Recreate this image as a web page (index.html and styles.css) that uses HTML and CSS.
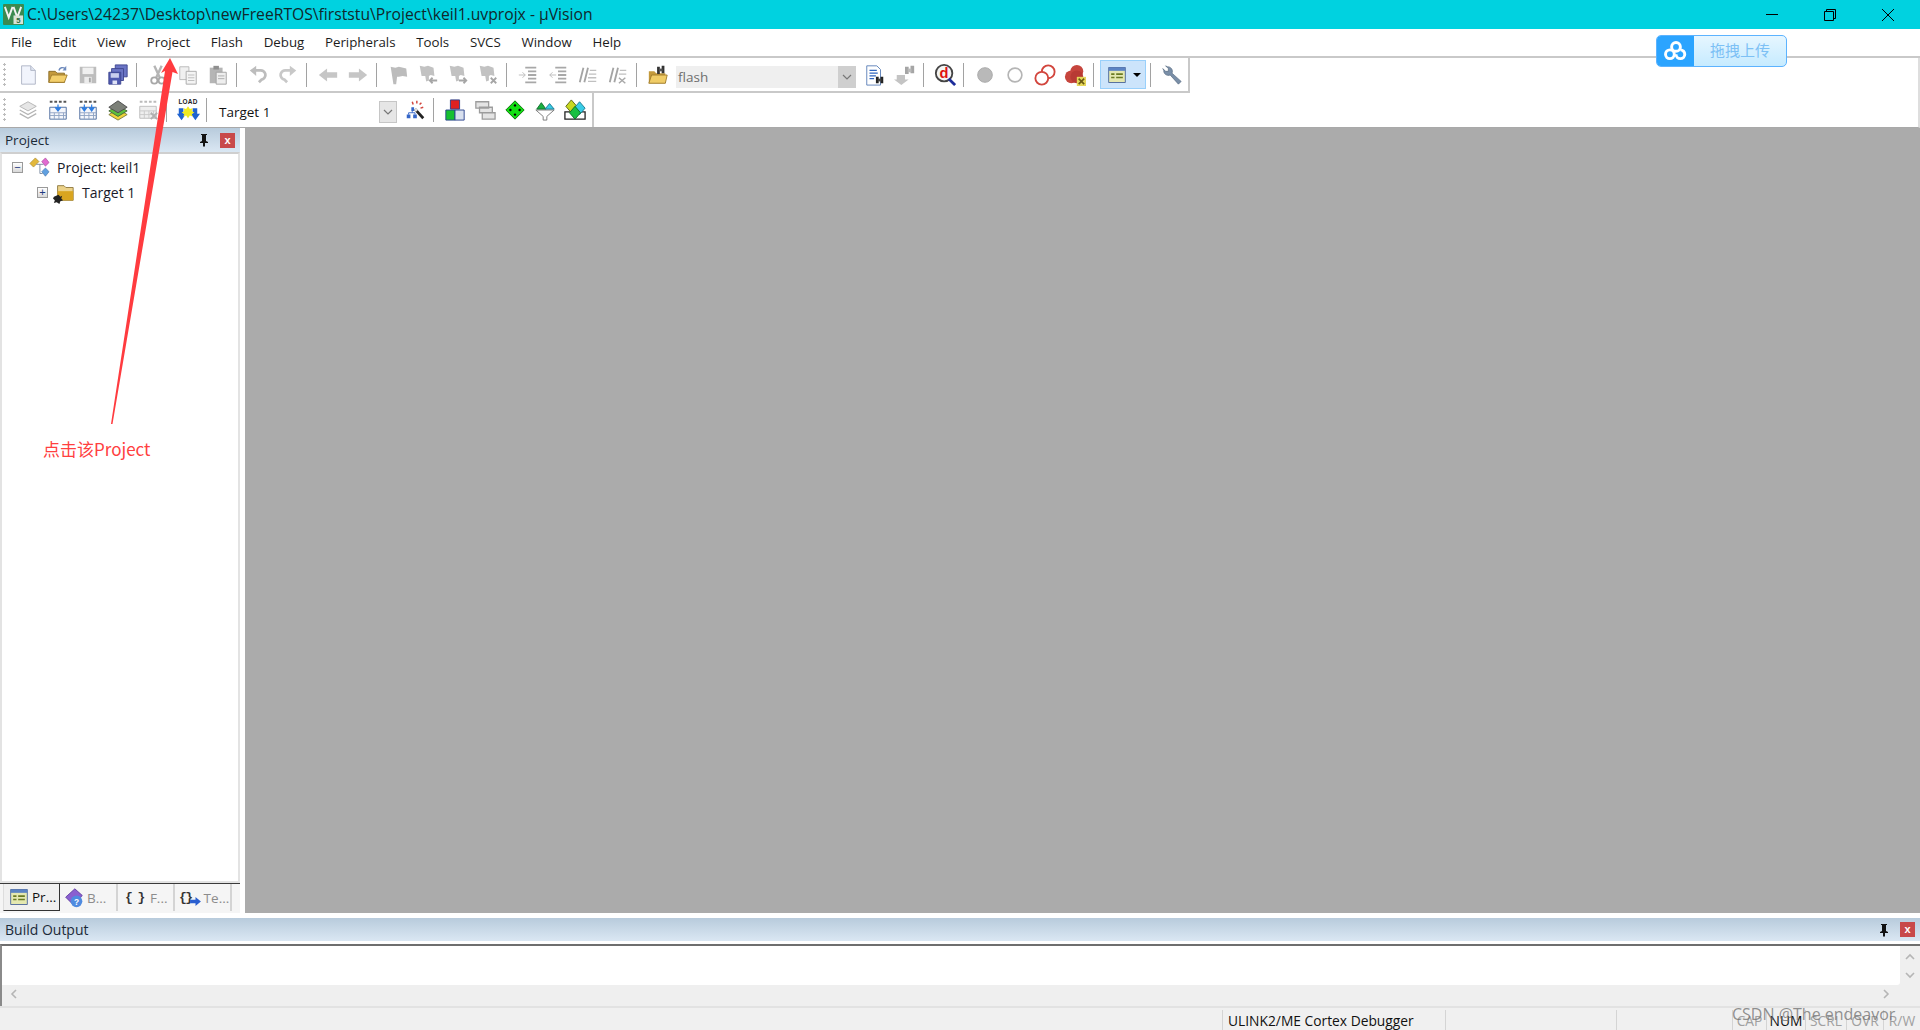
FILE: index.html
```html
<!DOCTYPE html>
<html lang="en">
<head>
<meta charset="utf-8">
<title>keil1 - µVision</title>
<link rel="stylesheet" href="styles.css">
</head>
<body>
<svg class="defs" width="0" height="0">
  <symbol id="new" viewBox="0 0 24 24"><path d="M5 2h10l5 5v15H5z" fill="#f1f4fc" stroke="#aeb4c4"/><path d="M15 2v5h5" fill="#dfe4f0" stroke="#aeb4c4"/></symbol>
  <symbol id="open" viewBox="0 0 24 24"><path d="M2 8h7l2 2h8v10H2z" fill="#c49a3c" stroke="#8a6a24"/><path d="M2 20l3-8h17l-3 8z" fill="#f3cf6b" stroke="#a07c2c"/><path d="M13 7c1-3 4-4 7-2" fill="none" stroke="#6f8bbd" stroke-width="1.6"/><path d="M21 2v5h-4z" fill="#6f8bbd"/></symbol>
  <symbol id="save" viewBox="0 0 24 24"><path d="M3 3h18v18H3z" fill="#bdbdbd"/><path d="M6 4h12v7H6z" fill="#f0f0f0"/><path d="M8 14h8v7H8z" fill="#ececec"/><path d="M13 15h2v5h-2z" fill="#a5a5a5"/></symbol>
  <symbol id="saveall" viewBox="0 0 24 24"><path d="M9 1h13v13H9z" fill="#6a74c4" stroke="#3e4690"/><path d="M5 5h13v13H5z" fill="#6a74c4" stroke="#3e4690"/><path d="M2 9h13v13H2z" fill="#4f5ab0" stroke="#3e4690"/><path d="M4 10h9v5H4z" fill="#c9cfee"/><path d="M6 18h5v4H6z" fill="#dfe3f6"/></symbol>
  <symbol id="cut" viewBox="0 0 24 24"><path d="M8 2l6 13M16 2l-6 13" stroke="#b5b5b5" stroke-width="2.6" fill="none"/><circle cx="8" cy="18" r="3.4" fill="none" stroke="#a8a8a8" stroke-width="2"/><circle cx="16" cy="18" r="3.4" fill="none" stroke="#a8a8a8" stroke-width="2"/></symbol>
  <symbol id="copy" viewBox="0 0 24 24"><path d="M3 3h10v14H3z" fill="#f0f0f0" stroke="#b8b8b8"/><path d="M10 8h11v14H10z" fill="#f4f4f4" stroke="#a8a8a8"/><path d="M12 12h7M12 15h7M12 18h7" stroke="#bbb"/></symbol>
  <symbol id="paste" viewBox="0 0 24 24"><path d="M3 4h14v17H3z" fill="#b5b5b5"/><path d="M7 2h6v4H7z" fill="#8f8f8f"/><path d="M10 9h11v13H10z" fill="#eee" stroke="#a0a0a0"/><path d="M12 13h7M12 16h7" stroke="#aaa"/></symbol>
  <symbol id="undo" viewBox="0 0 24 24"><path d="M8 7h6a5 5 0 0 1 2 10l-3 3" fill="none" stroke="#bdbdbd" stroke-width="3"/><path d="M10 2v11L3 7z" fill="#bdbdbd"/></symbol>
  <symbol id="redo" viewBox="0 0 24 24"><path d="M16 7h-6a5 5 0 0 0-2 10l3 3" fill="none" stroke="#c8c8c8" stroke-width="3"/><path d="M14 2v11l7-6z" fill="#c8c8c8"/></symbol>
  <symbol id="back" viewBox="0 0 24 24"><path d="M2 12l9-7v4h11v6H11v4z" fill="#c6c6c6"/></symbol>
  <symbol id="fwd" viewBox="0 0 24 24"><path d="M22 12l-9-7v4H2v6h11v4z" fill="#c6c6c6"/></symbol>
  <symbol id="flag" viewBox="0 0 24 24"><path d="M4 3l5 1 4-1 8 2 1 9-5-1-4 1-2 0-1 8H7z" fill="#bcbcbc"/></symbol>
  <symbol id="flagl" viewBox="0 0 24 24"><path d="M3 2l5 1 4-1 6 2 1 9-4-1-2 1v5l-3 1-1-6H5z" fill="#c2c2c2"/><path d="M22 18h-8M17 15l-3 3 3 3" stroke="#a6a6a6" stroke-width="2" fill="none"/></symbol>
  <symbol id="flagr" viewBox="0 0 24 24"><path d="M3 2l5 1 4-1 6 2 1 9-4-1-2 1v5l-3 1-1-6H5z" fill="#c2c2c2"/><path d="M13 18h8M18 15l3 3-3 3" stroke="#a6a6a6" stroke-width="2" fill="none"/></symbol>
  <symbol id="flagx" viewBox="0 0 24 24"><path d="M3 2l5 1 4-1 6 2 1 9-4-1-2 1v5l-3 1-1-6H5z" fill="#c2c2c2"/><path d="M15 15l6 6M21 15l-6 6" stroke="#a6a6a6" stroke-width="2"/></symbol>
  <symbol id="indent" viewBox="0 0 24 24"><path d="M9 4h12M12 8h9M12 12h9M12 16h9M9 20h12" stroke="#a8a8a8" stroke-width="2"/><path d="M2 12h7M6 9l3 3-3 3" stroke="#bbb" fill="none"/></symbol>
  <symbol id="outdent" viewBox="0 0 24 24"><path d="M9 4h12M12 8h9M12 12h9M12 16h9M9 20h12" stroke="#a8a8a8" stroke-width="2"/><path d="M3 12h7M6 9l-3 3 3 3" stroke="#bbb" fill="none"/></symbol>
  <symbol id="cmt" viewBox="0 0 24 24"><path d="M7 4L3 20M12 4L8 20" stroke="#a4a4a4" stroke-width="2"/><path d="M14 7h7M13 11h8M12 15h9M12 19h9" stroke="#c0c0c0" stroke-width="1.4"/></symbol>
  <symbol id="uncmt" viewBox="0 0 24 24"><path d="M7 4L3 20M12 4L8 20" stroke="#a4a4a4" stroke-width="2"/><path d="M14 7h7M13 11h8" stroke="#c0c0c0" stroke-width="1.4"/><path d="M13 15l7 6M20 15l-7 6" stroke="#a8a8a8" stroke-width="1.6"/></symbol>
  <symbol id="findfold" viewBox="0 0 24 24"><path d="M2 8h6l2 2h10v11H2z" fill="#c49a3c"/><path d="M2 21l3-9h17l-2 9z" fill="#f0cc66" stroke="#a07c2c"/><path d="M11 3h3v8h-3zM16 2h3v8h-3z" fill="#333"/><path d="M13 5h4v3h-4z" fill="#555"/></symbol>
  <symbol id="finddoc" viewBox="0 0 24 24"><path d="M3 2h11l4 4v17H3z" fill="#fff" stroke="#5b7fb8"/><path d="M6 7h8M6 10h9M6 13h7M6 16h5" stroke="#2f66c0" stroke-width="1.5"/><path d="M13 14h3v7h-3zM18 14h3v7h-3z" fill="#222"/><path d="M15 16h4v3h-4z" fill="#444"/></symbol>
  <symbol id="findgray" viewBox="0 0 24 24"><path d="M12 3h4v8h-4zM18 2h4v8h-4z" fill="#a5a5a5"/><path d="M15 5h4v4h-4z" fill="#bbb"/><path d="M3 12h9v5h4l-8 6-8-6h3z" fill="#c4c4c4"/></symbol>
  <symbol id="debug" viewBox="0 0 24 24"><circle cx="11" cy="10" r="9" fill="#f4f4f4" stroke="#444" stroke-width="2"/><path d="M16 16l7 7" stroke="#1c2c9a" stroke-width="3"/></symbol>
  <symbol id="bp" viewBox="0 0 24 24"><circle cx="12" cy="12" r="8" fill="#b9b9b9" stroke="#a9a9a9"/></symbol>
  <symbol id="bpo" viewBox="0 0 24 24"><circle cx="12" cy="12" r="7.5" fill="#fff" stroke="#b5b5b5" stroke-width="1.8"/></symbol>
  <symbol id="bpd" viewBox="0 0 24 24"><circle cx="15.500" cy="8.500" r="7" fill="#fff" stroke="#d2453d" stroke-width="2"/><circle cx="8.500" cy="15.500" r="7" fill="#fff" stroke="#d2453d" stroke-width="2"/></symbol>
  <symbol id="bpk" viewBox="0 0 24 24"><circle cx="14" cy="8" r="7" fill="#c6453d"/><circle cx="8" cy="14" r="7" fill="#c6453d"/><circle cx="14" cy="14" r="7" fill="#b83a34"/><path d="M14 14h10v10H14z" fill="#e6d75a"/><path d="M16 16l6 6M22 16l-6 6" stroke="#6b5b12" stroke-width="1.8"/></symbol>
  <symbol id="win" viewBox="0 0 24 24"><path d="M2 3h20v18H2z" fill="#e4e8b0" stroke="#3f5a94"/><path d="M2 3h20v4H2z" fill="#5b83c4"/><path d="M5 10h4v2H5zM5 14h4v2H5zM11 10h8v2h-8zM11 14h8v2h-8z" fill="#6a7a22"/></symbol>
  <symbol id="wrench" viewBox="0 0 24 24"><path d="M3 7a5 5 0 0 0 7 5l9 10 3-3-10-9a5 5 0 0 0-5-7L5 2l3 3v3H5L2 5z" fill="#7a8fa8" stroke="#52657d" stroke-width=".7"/></symbol>
  <symbol id="trans" viewBox="0 0 24 24"><path d="M12 3l9 5-9 5-9-5z" fill="#e6e6e6" stroke="#b4b4b4"/><path d="M3 12l9 5 9-5M3 16l9 5 9-5" fill="none" stroke="#b4b4b4" stroke-width="1.5"/></symbol>
  <symbol id="build" viewBox="0 0 24 24"><path d="M3 9h18v13H3z" fill="#f4f6fb" stroke="#4a6a9c"/><path d="M3 15h18M3 18h18M8 15v7M13 15v7M18 15v7" stroke="#8fa3c3"/><path d="M3 3h18" stroke="#555" stroke-width="2" stroke-dasharray="3 2"/><path d="M12 6v6M9 9l3 4 3-4" fill="#2f7de0" stroke="#2f7de0" stroke-width="1.4"/></symbol>
  <symbol id="rebuild" viewBox="0 0 24 24"><path d="M3 9h18v13H3z" fill="#f4f6fb" stroke="#4a6a9c"/><path d="M3 15h18M3 18h18M8 15v7M13 15v7M18 15v7" stroke="#8fa3c3"/><path d="M3 3h18" stroke="#555" stroke-width="2" stroke-dasharray="3 2"/><path d="M8 6v6M5 9l3 4 3-4M16 6v6M13 9l3 4 3-4" fill="#2f7de0" stroke="#2f7de0" stroke-width="1.3"/></symbol>
  <symbol id="batch" viewBox="0 0 24 24"><path d="M2 17l10 6 10-6-10-6z" fill="#f0d43c" stroke="#7c7c3c"/><path d="M2 13l10 6 10-6-10-6z" fill="#5cbf3c" stroke="#4a6a3c"/><path d="M2 9l10 6 10-6-10-7z" fill="#7c8078" stroke="#4a4a4a"/></symbol>
  <symbol id="stop" viewBox="0 0 24 24"><path d="M3 8h18v13H3z" fill="#eee" stroke="#bbb"/><path d="M3 13h18M3 17h18M8 13v8M13 13v8M18 13v8" stroke="#c8c8c8"/><path d="M3 3h18" stroke="#bbb" stroke-width="2" stroke-dasharray="3 2"/><path d="M15 15l7 7M22 15l-7 7" stroke="#b0b0b0" stroke-width="2"/></symbol>
  <symbol id="load" viewBox="0 0 26 26"><path d="M3 11h5v6h3l-5 7-5-7h2zM18 11h5v6h3l-5 7-5-7h2z" fill="#1f63d0"/><path d="M13 9l2 3 3-1-1 3 3 2-3 1 1 3-3-1-2 3-2-3-3 1 1-3-3-1 3-2-1-3 3 1z" fill="#f0ea20"/></symbol>
  <symbol id="wand" viewBox="0 0 24 24"><path d="M12 11l9 10" stroke="#222" stroke-width="3"/><path d="M12 11l2 2" stroke="#ddd" stroke-width="3"/><path d="M9 3l1 3M14 2v3M19 4l-2 2M21 9l-3 1" stroke="#d2453d" stroke-width="1.6"/><path d="M8 9h3v4H8zM3 17h4v4H3zM10 17h4v4h-4z" fill="#3566c8"/><path d="M9 13v2M5 17v-2h7v2" stroke="#3566c8" fill="none"/></symbol>
  <symbol id="blocks" viewBox="0 0 24 24"><path d="M7 1h10v10H7z" fill="#e02020" stroke="#28428c"/><path d="M2 12h10v11H2z" fill="#16c030" stroke="#28428c"/><path d="M12 12h10v11H12z" fill="#d8e0ee" stroke="#28428c"/></symbol>
  <symbol id="wins" viewBox="0 0 24 24"><path d="M2 3h14v7H2zM6 9h14v6H6zM9 15h14v7H9z" fill="#e4e4e4" stroke="#9c9c9c" stroke-width="1.4"/></symbol>
  <symbol id="gem" viewBox="0 0 24 24"><path d="M12 2l10 10-10 10L2 12z" fill="#12e012" stroke="#0a6a0a"/><circle cx="12" cy="7" r="1.3"/><circle cx="7" cy="12" r="1.3"/><circle cx="17" cy="12" r="1.3"/><circle cx="12" cy="17" r="1.3"/></symbol>
  <symbol id="funnel" viewBox="0 0 24 24"><path d="M2 12h20l-8 7v4h-4v-4z" fill="#fff" stroke="#777"/><path d="M3 11l5-7 5 7z" fill="#18b040" stroke="#0d6a28"/><path d="M12 11l5-6 5 6z" fill="#38cce6" stroke="#1a7a90"/></symbol>
  <symbol id="gems" viewBox="0 0 24 24"><path d="M1 14h22v8H1z" fill="#fff" stroke="#222" stroke-width="1.4"/><path d="M8 1l6 7-6 7-6-7z" fill="#c8d820" stroke="#556010"/><path d="M17 3l6 7-6 7-6-7z" fill="#38cce6" stroke="#1a7a90"/><path d="M12 8l6 7-6 7-6-7z" fill="#18c040" stroke="#0d6a28"/></symbol>
  <symbol id="proj" viewBox="0 0 24 24"><path d="M2 7l6-6 4 4-6 6z" fill="#e2b83c" stroke="#9a7a20" stroke-width=".6"/><path d="M15 5l4-4 4 5-4 4z" fill="#e06cd0" stroke="#9c3a90" stroke-width=".6"/><path d="M15 16l4-4 4 4-4 5z" fill="#60a0e0" stroke="#3a6aa0" stroke-width=".6"/><path d="M9 8h8M13 8v10h3" fill="none" stroke="#7a8aa0"/></symbol>
  <symbol id="folder" viewBox="0 0 24 24"><path d="M5 4h7l2 2h8v14H5z" fill="#ecd28a" stroke="#8f7a40"/><path d="M5 10h17v10H5z" fill="#d9a520"/><path d="M1 16l5-2 2 2 2-1-1 3 2 2-3 1-1 3-3-2-3 1 1-3-2-2z" fill="#222"/></symbol>
  <symbol id="book" viewBox="0 0 24 24"><path d="M2 11L13 1l9 8-11 11z" fill="#8a5fd0" stroke="#5c3a9c"/><circle cx="15" cy="16" r="7" fill="#4f8be0"/></symbol>
  <symbol id="bluearrow" viewBox="0 0 12 10"><path d="M0 3h6V0l6 5-6 5V7H0z" fill="#2a5fd0"/></symbol>
  <symbol id="pin" viewBox="0 0 12 14"><path d="M3 1h6v1H8v6l2 1v1H2V9l2-1V2H3zM5 10h2v3l-1 1-1-1z" fill="#111"/></symbol>
  <symbol id="chev" viewBox="0 0 12 12"><path d="M2 4l4 4 4-4" fill="none" stroke="#777" stroke-width="1.2"/></symbol>
  <symbol id="chev-light" viewBox="0 0 12 12"><path d="M2 8l4-4 4 4" fill="none" stroke="#b5b5b5" stroke-width="1.6"/></symbol>
  <symbol id="chev-down" viewBox="0 0 12 12"><path d="M2 4l4 4 4-4" fill="none" stroke="#b5b5b5" stroke-width="1.6"/></symbol>
  <symbol id="chev-left" viewBox="0 0 12 12"><path d="M8 2L4 6l4 4" fill="none" stroke="#b5b5b5" stroke-width="1.6"/></symbol>
  <symbol id="chev-right" viewBox="0 0 12 12"><path d="M4 2l4 4-4 4" fill="none" stroke="#b5b5b5" stroke-width="1.6"/></symbol>
  <symbol id="cloud" viewBox="0 0 32 26"><g fill="none" stroke="#fff" stroke-width="3.6"><circle cx="16" cy="8" r="5.4"/><circle cx="8.5" cy="17" r="5.4"/><path d="M16 17a5.4 5.4 0 1 0 5.4-5.4"/></g></symbol>
</svg>

<header class="titlebar">
  <svg class="appicon" viewBox="0 0 22 22"><rect width="22" height="22" rx="1" fill="#3a8a50"/><path d="M2 3l4 11 4-11M11 3l4 11 4-11" fill="none" stroke="#f2f2f2" stroke-width="2"/><rect x="11" y="12" width="10" height="9" fill="#d8e4d8"/><text x="16" y="20" text-anchor="middle" class="svg-5">5</text></svg>
  <span class="title-text">C:\Users\24237\Desktop\newFreeRTOS\firststu\Project\keil1.uvprojx - µVision</span>
  <div class="winctl">
    <svg class="wbtn" viewBox="0 0 12 12"><path d="M0 5.500h12" stroke="#000" fill="none"/></svg>
    <svg class="wbtn" viewBox="0 0 12 12"><path d="M.5 2.500h9v9h-9zM2.500 2.500v-2h9v9h-2" stroke="#000" fill="none"/></svg>
    <svg class="wbtn" viewBox="0 0 12 12"><path d="M0 0l12 12M12 0L0 12" stroke="#000" fill="none"/></svg>
  </div>
</header>

<nav class="menubar">
  <span class="mi">File</span><span class="mi">Edit</span><span class="mi">View</span><span class="mi">Project</span><span class="mi">Flash</span><span class="mi">Debug</span><span class="mi">Peripherals</span><span class="mi">Tools</span><span class="mi">SVCS</span><span class="mi">Window</span><span class="mi">Help</span>
</nav>

<section class="toolbars">
  <div class="toolbar tb-file">
    <span class="grip"></span>
    <span class="cell"><svg class="ic"><use href="#new"/></svg></span>
    <span class="cell"><svg class="ic"><use href="#open"/></svg></span>
    <span class="cell"><svg class="ic"><use href="#save"/></svg></span>
    <span class="cell"><svg class="ic"><use href="#saveall"/></svg></span>
    <span class="sep"></span>
    <span class="cell"><svg class="ic"><use href="#cut"/></svg></span>
    <span class="cell"><svg class="ic"><use href="#copy"/></svg></span>
    <span class="cell"><svg class="ic"><use href="#paste"/></svg></span>
    <span class="sep"></span>
    <span class="cell"><svg class="ic"><use href="#undo"/></svg></span>
    <span class="cell"><svg class="ic"><use href="#redo"/></svg></span>
    <span class="sep"></span>
    <span class="cell"><svg class="ic"><use href="#back"/></svg></span>
    <span class="cell"><svg class="ic"><use href="#fwd"/></svg></span>
    <span class="sep"></span>
    <span class="cell"><svg class="ic"><use href="#flag"/></svg></span>
    <span class="cell"><svg class="ic"><use href="#flagl"/></svg></span>
    <span class="cell"><svg class="ic"><use href="#flagr"/></svg></span>
    <span class="cell"><svg class="ic"><use href="#flagx"/></svg></span>
    <span class="sep"></span>
    <span class="cell"><svg class="ic"><use href="#indent"/></svg></span>
    <span class="cell"><svg class="ic"><use href="#outdent"/></svg></span>
    <span class="cell"><svg class="ic"><use href="#cmt"/></svg></span>
    <span class="cell"><svg class="ic"><use href="#uncmt"/></svg></span>
    <span class="sep"></span>
    <span class="cell"><svg class="ic"><use href="#findfold"/></svg></span>
    <div class="combo combo-flash"><span class="combo-text">flash</span><span class="combo-btn"><svg class="chev"><use href="#chev"/></svg></span></div>
    <span class="cell"><svg class="ic"><use href="#finddoc"/></svg></span>
    <span class="cell"><svg class="ic"><use href="#findgray"/></svg></span>
    <span class="sep"></span>
    <span class="cell"><svg class="ic" viewBox="0 0 24 24"><use href="#debug"/><text x="11" y="15.500" text-anchor="middle" class="svg-d">d</text></svg></span>
    <span class="sep"></span>
    <span class="cell"><svg class="ic"><use href="#bp"/></svg></span>
    <span class="cell"><svg class="ic"><use href="#bpo"/></svg></span>
    <span class="cell"><svg class="ic"><use href="#bpd"/></svg></span>
    <span class="cell"><svg class="ic"><use href="#bpk"/></svg></span>
    <span class="sep"></span>
    <span class="active-btn"><svg class="ic"><use href="#win"/></svg><span class="caret"></span></span>
    <span class="sep sep-tight"></span>
    <span class="cell"><svg class="ic"><use href="#wrench"/></svg></span>
  </div>
  <div class="toolbar tb-build">
    <span class="grip"></span>
    <span class="cell"><svg class="ic"><use href="#trans"/></svg></span>
    <span class="cell"><svg class="ic"><use href="#build"/></svg></span>
    <span class="cell"><svg class="ic"><use href="#rebuild"/></svg></span>
    <span class="cell"><svg class="ic"><use href="#batch"/></svg></span>
    <span class="cell"><svg class="ic"><use href="#stop"/></svg></span>
    <span class="sep"></span>
    <span class="cell"><svg class="ic ic-load" viewBox="0 0 26 26"><use href="#load"/><text x="13" y="7" text-anchor="middle" class="svg-load">LOAD</text></svg></span>
    <span class="sep"></span>
    <div class="combo combo-target"><span class="combo-text">Target 1</span><span class="combo-btn"><svg class="chev"><use href="#chev"/></svg></span></div>
    <span class="cell"><svg class="ic"><use href="#wand"/></svg></span>
    <span class="sep"></span>
    <span class="cell"><svg class="ic"><use href="#blocks"/></svg></span>
    <span class="cell"><svg class="ic"><use href="#wins"/></svg></span>
    <span class="cell"><svg class="ic"><use href="#gem"/></svg></span>
    <span class="cell"><svg class="ic"><use href="#funnel"/></svg></span>
    <span class="cell"><svg class="ic"><use href="#gems"/></svg></span>
  </div>
</section>

<main class="workspace">
  <aside class="project">
    <div class="panel-head"><span class="panel-title">Project</span><svg class="pin"><use href="#pin"/></svg><span class="close">x</span></div>
    <div class="tree">
      <div class="row row-root"><span class="box">−</span><svg class="tree-ic"><use href="#proj"/></svg><span>Project: keil1</span></div>
      <div class="row row-child"><span class="box">+</span><svg class="tree-ic"><use href="#folder"/></svg><span>Target 1</span></div>
    </div>
    <div class="tabs">
      <span class="tab tab-on"><svg class="tab-ic"><use href="#win"/></svg>Pr...</span>
      <span class="tab tab-b"><svg class="tab-ic" viewBox="0 0 24 24"><use href="#book"/><text x="15" y="20" text-anchor="middle" class="svg-q">?</text></svg>B...</span>
      <span class="tab tab-f"><b class="brace">{ }</b>F...</span>
      <span class="tab tab-t"><b class="brace">{}</b><svg class="arrow-ic"><use href="#bluearrow"/></svg>Te...</span>
    </div>
  </aside>
  <div class="mdi"></div>
</main>

<section class="build">
  <div class="panel-head panel-head-build"><span class="panel-title">Build Output</span><svg class="pin"><use href="#pin"/></svg><span class="close">x</span></div>
  <div class="output">
    <div class="output-main">
      <div class="output-text"></div>
      <div class="vscroll"><svg class="sc"><use href="#chev-light"/></svg><svg class="sc"><use href="#chev-down"/></svg></div>
    </div>
    <div class="hscroll"><svg class="sc"><use href="#chev-left"/></svg><svg class="sc"><use href="#chev-right"/></svg></div>
  </div>
</section>

<footer class="statusbar">
  <span class="st st-a"></span>
  <span class="st st-b">ULINK2/ME Cortex Debugger</span>
  <span class="st st-c"></span>
  <span class="st st-d"></span>
  <span class="st st-cap off">CAP</span>
  <span class="st st-num">NUM</span>
  <span class="st st-scrl off">SCRL</span>
  <span class="st st-ovr off">OVR</span>
  <span class="st st-rw off">R/W</span>
</footer>

<div class="badge"><span class="badge-ic"><svg class="cloud"><use href="#cloud"/></svg></span><span class="badge-text">拖拽上传</span></div>
<svg class="annot-arrow" viewBox="0 0 1920 1030"><polygon points="170,58 178,74 172.5,72 112.5,424 111,424 165,71 161,73" fill="#ff3b3f"/></svg>
<div class="annot">点击该Project</div>
<div class="watermark">CSDN @The endeavor</div>
</body>
</html>
```
FILE: styles.css
```css
* { box-sizing: border-box; }
html, body { margin: 0; padding: 0; }
body {
  width: 1920px; height: 1030px; overflow: hidden; position: relative;
  display: flex; flex-direction: column; background: #fff;
  font-family: "Open Sans", "Noto Sans", sans-serif; font-size: 13px; color: #111;
}
.defs { position: absolute; left: 0; top: 0; }
.svg-d { font: bold 16px "Liberation Sans", sans-serif; fill: #e01010; }
.svg-q { font: bold 10px "Liberation Sans", sans-serif; fill: #fff; }
.svg-5 { font: bold 8px "Liberation Sans", sans-serif; fill: #2a6a3a; }
.svg-load { font: bold 7px "Liberation Sans", sans-serif; fill: #222; letter-spacing: .2px; }

.titlebar { height: 29px; flex: none; background: #00d2e0; display: flex; align-items: center; padding-left: 3px; }
.appicon { width: 21px; height: 21px; flex: none; }
.title-text { margin: 0 0 2px 3px; font-size: 15.700px; color: #10282c; white-space: nowrap; }
.winctl { margin-left: auto; display: flex; padding-right: 26px; gap: 46px; }
.wbtn { width: 12px; height: 12px; display: block; }

.menubar { height: 29px; flex: none; display: flex; align-items: center; border-bottom: 2px solid #c9c9c9; padding-left: 11px; }
.mi { margin: 0 20.700px 1px 0; font-size: 13.300px; color: #1c1c1c; white-space: nowrap; }

.toolbars { flex: none; height: 70px; border-bottom: 1px solid #a9a9a9; border-right: 2px solid #dedede; display: flex; flex-direction: column; align-items: flex-start; }
.toolbar { display: flex; align-items: center; flex: none; border-right: 2px solid #c9c9c9; }
.tb-file { width: 1190px; height: 35px; border-bottom: 2px solid #c9c9c9; }
.tb-build { width: 594px; height: 34px; }
.grip { width: 13px; height: 26px; flex: none; background: radial-gradient(circle, #bcbcbc 1px, transparent 1.200px) 2px 0 / 5px 5px repeat-y; }
.cell { width: 30px; height: 30px; flex: none; display: flex; align-items: center; justify-content: center; }
.ic { width: 22px; height: 22px; display: block; }
.ic-load { width: 24px; height: 24px; }
.sep { width: 1px; height: 24px; flex: none; margin: 0 6px 0 3px; background: #a2a2a2; }
.sep-tight { margin: 0 6px 0 4px; }
.combo { display: flex; align-items: center; flex: none; }
.combo-flash { width: 180px; height: 22px; margin: 4px 4px 0 3px; background: #efefef; color: #6e6e6e; }
.combo-target { width: 184px; height: 22px; margin: 4px 3px 0 0; padding-left: 4px; color: #111; }
.combo-text { flex: 1; font-size: 13.500px; padding-left: 2px; }
.combo-btn { width: 18px; height: 22px; display: flex; align-items: center; justify-content: center; background: #e6e6e6; border: 1px solid #c6c6c6; }
.combo-flash .combo-btn { background: #cfcfcf; border-color: #cfcfcf; }
.chev { width: 12px; height: 12px; }
.active-btn { width: 46px; height: 29px; flex: none; display: flex; align-items: center; gap: 6px; padding-left: 6px; background: #cce4fb; border: 1px solid #99d0fb; }
.active-btn .ic { width: 20px; height: 20px; }
.caret { width: 0; height: 0; border: 4px solid transparent; border-top: 4px solid #000; border-bottom: 0; }

.workspace { flex: none; height: 785px; display: flex; }
.project { width: 240px; flex: none; display: flex; flex-direction: column; }
.panel-head { height: 24px; flex: none; display: flex; align-items: center; padding: 0 5px; background: linear-gradient(#b8cbdc, #dae7f3); }
.panel-title { flex: 1; font-size: 13.500px; color: #1c2a38; }
.pin { width: 12px; height: 14px; margin-right: 10px; }
.close { width: 15px; height: 15px; background: #c8494a; color: #fff; font: bold 11px/14px "Liberation Sans", sans-serif; text-align: center; }
.tree { flex: 1; border: 2px solid #e3e3e3; border-top-color: #cfcfcf; padding-top: 1px; font-size: 14px; color: #1a1a2a; }
.row { height: 25px; display: flex; align-items: center; }
.row-root { padding-left: 10px; }
.row-child { padding-left: 35px; }
.box { width: 11px; height: 11px; border: 1px solid #9a9a9a; background: linear-gradient(#fff, #d8d8d8); font: 11px/8px "Liberation Sans", sans-serif; color: #1f3a80; text-align: center; flex: none; }
.tree-ic { width: 22px; height: 22px; flex: none; margin: 0 7px 0 5px; }
.tabs { height: 30px; flex: none; display: flex; align-items: center; padding-left: 3px; background: #f5f5f5; border-top: 1px solid #3a3a3a; font-size: 13.500px; color: #8c8c8c; }
.tab { height: 27px; display: flex; align-items: center; flex: none; margin-top: -2px; border-right: 2px solid #d4d4d4; white-space: nowrap; }
.tab-on { width: 57px; padding-left: 5px; color: #111; background: #f0f0f0; border-right: 1px solid #333; border-bottom: 1px solid #333; border-left: 1px solid #ddd; }
.tab-b { width: 58px; padding-left: 4px; }
.tab-f { width: 57px; padding-left: 7px; }
.tab-t { width: 57px; padding-left: 4px; }
.tab-ic { width: 20px; height: 20px; margin-right: 3px; flex: none; }
.brace { color: #333; font: bold 13px "Liberation Mono", monospace; margin-right: 6px; letter-spacing: -1.500px; }
.tab-t .brace { margin-right: -2px; }
.arrow-ic { width: 11px; height: 9px; margin: 8px 3px 0 0; flex: none; }
.mdi { flex: 1; margin-left: 5px; background: #ababab; }

.build { flex: none; margin-top: 5px; }
.panel-head-build { height: 23px; }
.panel-head-build .panel-title { font-size: 14px; }
.output { border-left: 2px solid #8a8a8a; border-top: 2px solid #6e6e6e; margin-top: 3px; }
.output-main { height: 39px; display: flex; background: #efefef; }
.output-text { flex: 1; background: #fff; border-bottom-right-radius: 3px; }
.vscroll { width: 20px; flex: none; display: flex; flex-direction: column; align-items: center; justify-content: center; gap: 6px; }
.hscroll { height: 21px; background: #efefef; display: flex; align-items: center; justify-content: space-between; padding: 0 28px 4px 6px; }
.sc { width: 12px; height: 12px; display: block; }

.statusbar { flex: 1; display: flex; align-items: stretch; background: #f0f0f0; border-top: 2px solid #e2e2e2; font-size: 13.800px; color: #111; }
.st { flex: none; border-right: 1px solid #d4d4d4; display: flex; align-items: center; justify-content: center; white-space: nowrap; margin: 2px 0 0; }
.off { color: #a0a0a0; }
.st-a { width: 1223px; }
.st-b { width: 223px; justify-content: flex-start; padding-left: 5px; }
.st-c { width: 171px; }
.st-d { width: 116px; }
.st-cap { width: 34px; }
.st-num { width: 39px; }
.st-scrl { width: 41px; }
.st-ovr { width: 37px; }
.st-rw { width: 36px; border-right: 0; }

.badge { position: absolute; left: 1656px; top: 35px; width: 131px; height: 32px; display: flex; border: 1px solid #5cb3ff; border-radius: 5px; overflow: hidden; background: linear-gradient(#e6f6ff, #c6ebff); }
.badge-ic { width: 37px; background: #2ba4ff; display: flex; align-items: center; justify-content: center; }
.cloud { width: 26px; height: 22px; }
.badge-text { flex: 1; text-align: center; font: 15px/28px "Noto Sans CJK SC", sans-serif; color: #7cc0f5; }
.annot-arrow { position: absolute; left: 0; top: 0; width: 1920px; height: 1030px; pointer-events: none; }
.annot { position: absolute; left: 43px; top: 436px; font: 17px/26px "Noto Sans CJK SC", sans-serif; color: #ff4040; }
.watermark { position: absolute; left: 1732px; top: 1004px; font: 16px/20px "Open Sans", sans-serif; color: rgba(110,110,110,.75); white-space: nowrap; }
```
